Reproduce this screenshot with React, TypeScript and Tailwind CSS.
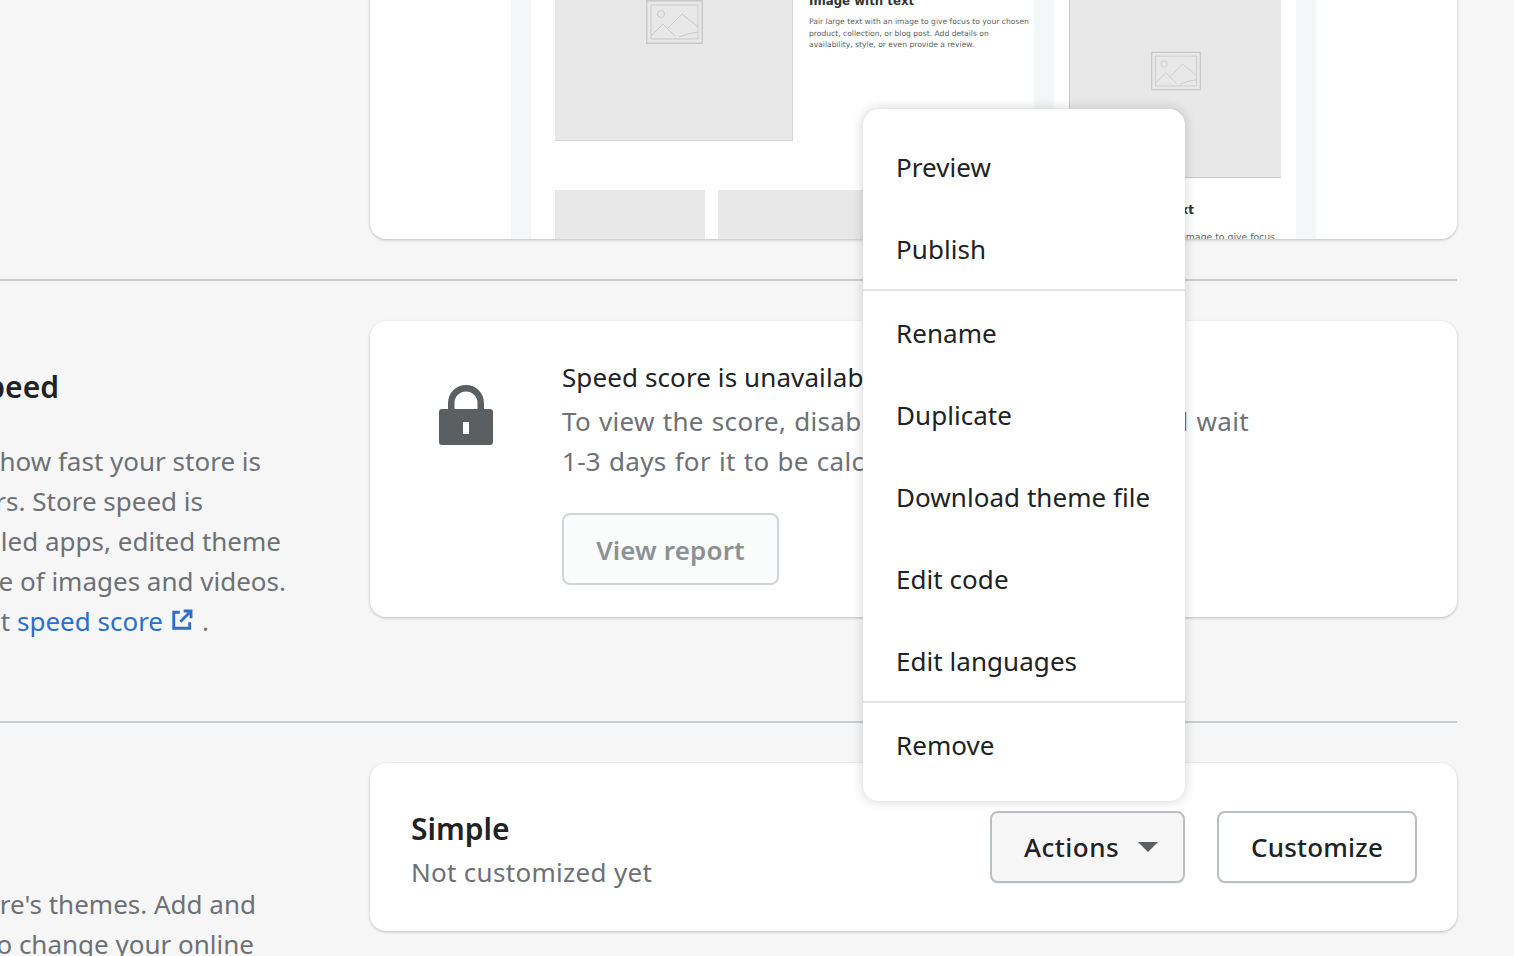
const font = "font-['Noto_Sans',sans-serif]";

function PlaceholderIcon({ className }: { className: string }) {
  return (
    <svg viewBox="0 0 57 44" fill="none" stroke="#c9c9c9" className={className}>
      <rect x="0.75" y="0.75" width="55.5" height="42.5" strokeWidth="1.5" />
      <rect x="5" y="5" width="47" height="34" strokeWidth="1" />
      <circle cx="15" cy="14" r="3.5" strokeWidth="1" />
      <path d="M5 36 L17 24 L29 36 M22 28 L36 14 L52 27 M33 37 Q42 33 52 32" strokeWidth="1" />
    </svg>
  );
}

function ExternalIcon() {
  return (
    <svg viewBox="0 0 20 20" className="ml-[8px] mb-[2px] h-[22px] w-[22px] shrink-0" fill="none" stroke="#2c6ecb" strokeWidth="2.6">
      <path d="M8 3H2.500v14.500H17V12" />
      <path d="M8.500 11.500 17.500 2.500M11.500 1.800h6.700v6.700" />
    </svg>
  );
}

function MenuItem({ label }: { label: string }) {
  return <div className="flex h-[82px] items-center px-[33px] pt-[1px] text-[26px] tracking-[0.05px] text-[#202223]">{label}</div>;
}

export default function App() {
  return (
    <div className={`relative h-[956px] w-[1514px] overflow-hidden bg-[#f6f6f7] ${font}`}>
      <div className="w-[1457px]">
        {/* Theme preview */}
        <section className="border-b-2 border-[#c9cccf] pb-[40px]">
          <div className="ml-[370px] -mt-[20px] flex h-[259px] overflow-hidden rounded-2xl bg-white pl-[141px] shadow-[0_1px_3px_rgba(23,24,24,0.25)]">
            <div className="w-[20px] bg-[#f4f6f8]" />
            <div className="w-[503px] px-[24px] font-['DejaVu_Sans',sans-serif]">
              <div className="flex">
                <div className="-mt-[76px] flex h-[237px] w-[238px] shrink-0 items-center justify-center border-r border-b border-[#d4d4d4] bg-[#e8e8e8]">
                  <PlaceholderIcon className="ml-[2px] h-[44px] w-[57px]" />
                </div>
                <div className="ml-[16px] mt-[14px] w-[225px]">
                  <div className="text-[11.8px] leading-[14px] font-bold text-[#333]">Image with text</div>
                  <p className="mt-[8px] text-[7.6px] leading-[11.5px] whitespace-nowrap text-[#5c5f62]">
                    Pair large text with an image to give focus to your chosen
                    <br />
                    product, collection, or blog post. Add details on
                    <br />
                    availability, style, or even provide a review.
                  </p>
                </div>
              </div>
              <div className="mt-[49px] flex gap-[13px]">
                <div className="h-[60px] w-[150px] shrink-0 bg-[#e8e8e8]" />
                <div className="h-[60px] w-[150px] shrink-0 bg-[#e8e8e8]" />
                <div className="h-[60px] w-[150px] shrink-0 bg-[#e8e8e8]" />
              </div>
            </div>
            <div className="w-[20px] bg-[#f4f6f8]" />
            <div className="w-[242px] font-['DejaVu_Sans',sans-serif]">
              <div className="-mt-[15px] ml-[15px] flex h-[213px] w-[212px] items-center justify-center border-b border-l border-[#c9c9c9] bg-[#e8e8e8]">
                <PlaceholderIcon className="h-[40px] w-[50px]" />
              </div>
              <div className="ml-[33px] mt-[25px] text-[12px] leading-[14px] font-bold whitespace-nowrap text-[#333]">Image with text</div>
              <p className="ml-[24px] mt-[14px] text-[9.3px] leading-[12px] whitespace-nowrap text-[#5c5f62]">Pair large text with an image to give focus</p>
            </div>
            <div className="w-[20px] bg-[#f4f6f8]" />
          </div>
        </section>

        {/* Online store speed */}
        <section className="flex border-b-2 border-[#c9cccf] pt-[40px] pb-[80px]">
          <div className="w-[370px] shrink-0 text-[26px] leading-[40px] whitespace-nowrap text-[#6d7175]">
            <div className="mt-[46px] flex w-[59px] justify-end text-[30px] font-semibold text-[#202223]">Online store speed</div>
            <div className="mt-[34px] flex w-[261px] justify-end">Your speed score shows how fast your store is</div>
            <div className="flex w-[203px] justify-end">for your customers. Store speed is</div>
            <div className="flex w-[281px] justify-end">affected by installed apps, edited theme</div>
            <div className="flex w-[286px] justify-end">code, and the size of images and videos.</div>
            <div className="flex w-[209px] items-center justify-end">
              Learn more about&nbsp;<span className="text-[#2c6ecb]">speed score</span>
              <ExternalIcon />
              <span className="ml-[9px]">.</span>
            </div>
          </div>
          <div className="flex h-[296px] flex-1 rounded-2xl bg-white pt-[36px] pl-[69px] shadow-[0_1px_3px_rgba(23,24,24,0.25)]">
            <svg viewBox="0 0 54 60" className="mt-[28px] h-[60px] w-[54px] shrink-0">
              <path d="M9 26V18a18 18 0 0 1 36 0v8h-6.500V18a11.500 11.500 0 0 0-23 0v8z" fill="#5c5f62" />
              <path fillRule="evenodd" d="M3 24h48a3 3 0 0 1 3 3v30a3 3 0 0 1-3 3H3a3 3 0 0 1-3-3V27a3 3 0 0 1 3-3zm21 13v12h6V37z" fill="#5c5f62" />
            </svg>
            <div className="ml-[69px]">
              <div className="h-[40px] text-[26px] leading-[40px] tracking-[0.1px] whitespace-nowrap text-[#202223]">Speed score is unavailable</div>
              <p className="mt-[4px] text-[26px] leading-[40px] tracking-[0.3px] [word-spacing:1px] whitespace-nowrap text-[#6d7175]">
                To view the score, disable the store password and wait
                <br />
                1-3 days for it to be calculated.
              </p>
              <button className="mt-[32px] h-[72px] w-[217px] rounded-lg border-2 border-[#d2d5d8] bg-[#fafbfb] pt-[2px] text-[26px] font-semibold tracking-[0.15px] text-[#8c9196]">View report</button>
            </div>
          </div>
        </section>

        {/* Current theme */}
        <section className="flex pt-[40px]">
          <div className="w-[370px] shrink-0 pt-[121px] text-[26px] leading-[40px] whitespace-nowrap text-[#6d7175]">
            <div className="flex w-[256px] justify-end">This is your online store's themes. Add and</div>
            <div className="flex w-[254px] justify-end">publish themes to change your online</div>
          </div>
          <div className="flex h-[168px] flex-1 items-center rounded-2xl bg-white pr-[40px] pl-[41px] shadow-[0_1px_3px_rgba(23,24,24,0.25)]">
            <div className="flex-1 pt-[5px]">
              <div className="text-[30px] leading-[44px] font-semibold text-[#202223]">Simple</div>
              <div className="mt-[1px] text-[26px] leading-[40px] tracking-[0.3px] text-[#6d7175]">Not customized yet</div>
            </div>
            <button className="flex h-[72px] w-[195px] items-center gap-[19px] rounded-lg border-2 border-[#babfc3] bg-[#f6f6f7] pl-[32px] text-[26px] font-medium tracking-[0.5px] text-[#202223] shadow-[0_1px_0_rgba(0,0,0,0.05)]">
              Actions
              <svg viewBox="0 0 20 10" className="h-[10px] w-[20px]">
                <path d="M0 0h20L10 10z" fill="#5c5f62" />
              </svg>
            </button>
            <button className="ml-[32px] h-[72px] w-[200px] rounded-lg border-2 border-[#babfc3] bg-white text-[26px] font-medium tracking-[0.2px] text-[#202223] shadow-[0_1px_0_rgba(0,0,0,0.05)]">Customize</button>
          </div>
        </section>
      </div>

      {/* Actions menu */}
      <div className="absolute top-[109px] left-[863px] h-[692px] w-[322px] rounded-2xl bg-white pt-[17px] shadow-[0_0_12px_rgba(23,24,24,0.2)]">
        <div className="h-[165px] border-b-2 border-[#e1e3e5]">
          <MenuItem label="Preview" />
          <MenuItem label="Publish" />
        </div>
        <div className="h-[412px] border-b-2 border-[#e1e3e5] pt-[1px]">
          <MenuItem label="Rename" />
          <MenuItem label="Duplicate" />
          <MenuItem label="Download theme file" />
          <MenuItem label="Edit code" />
          <MenuItem label="Edit languages" />
        </div>
        <div className="pt-[1px]">
          <MenuItem label="Remove" />
        </div>
      </div>
    </div>
  );
}
